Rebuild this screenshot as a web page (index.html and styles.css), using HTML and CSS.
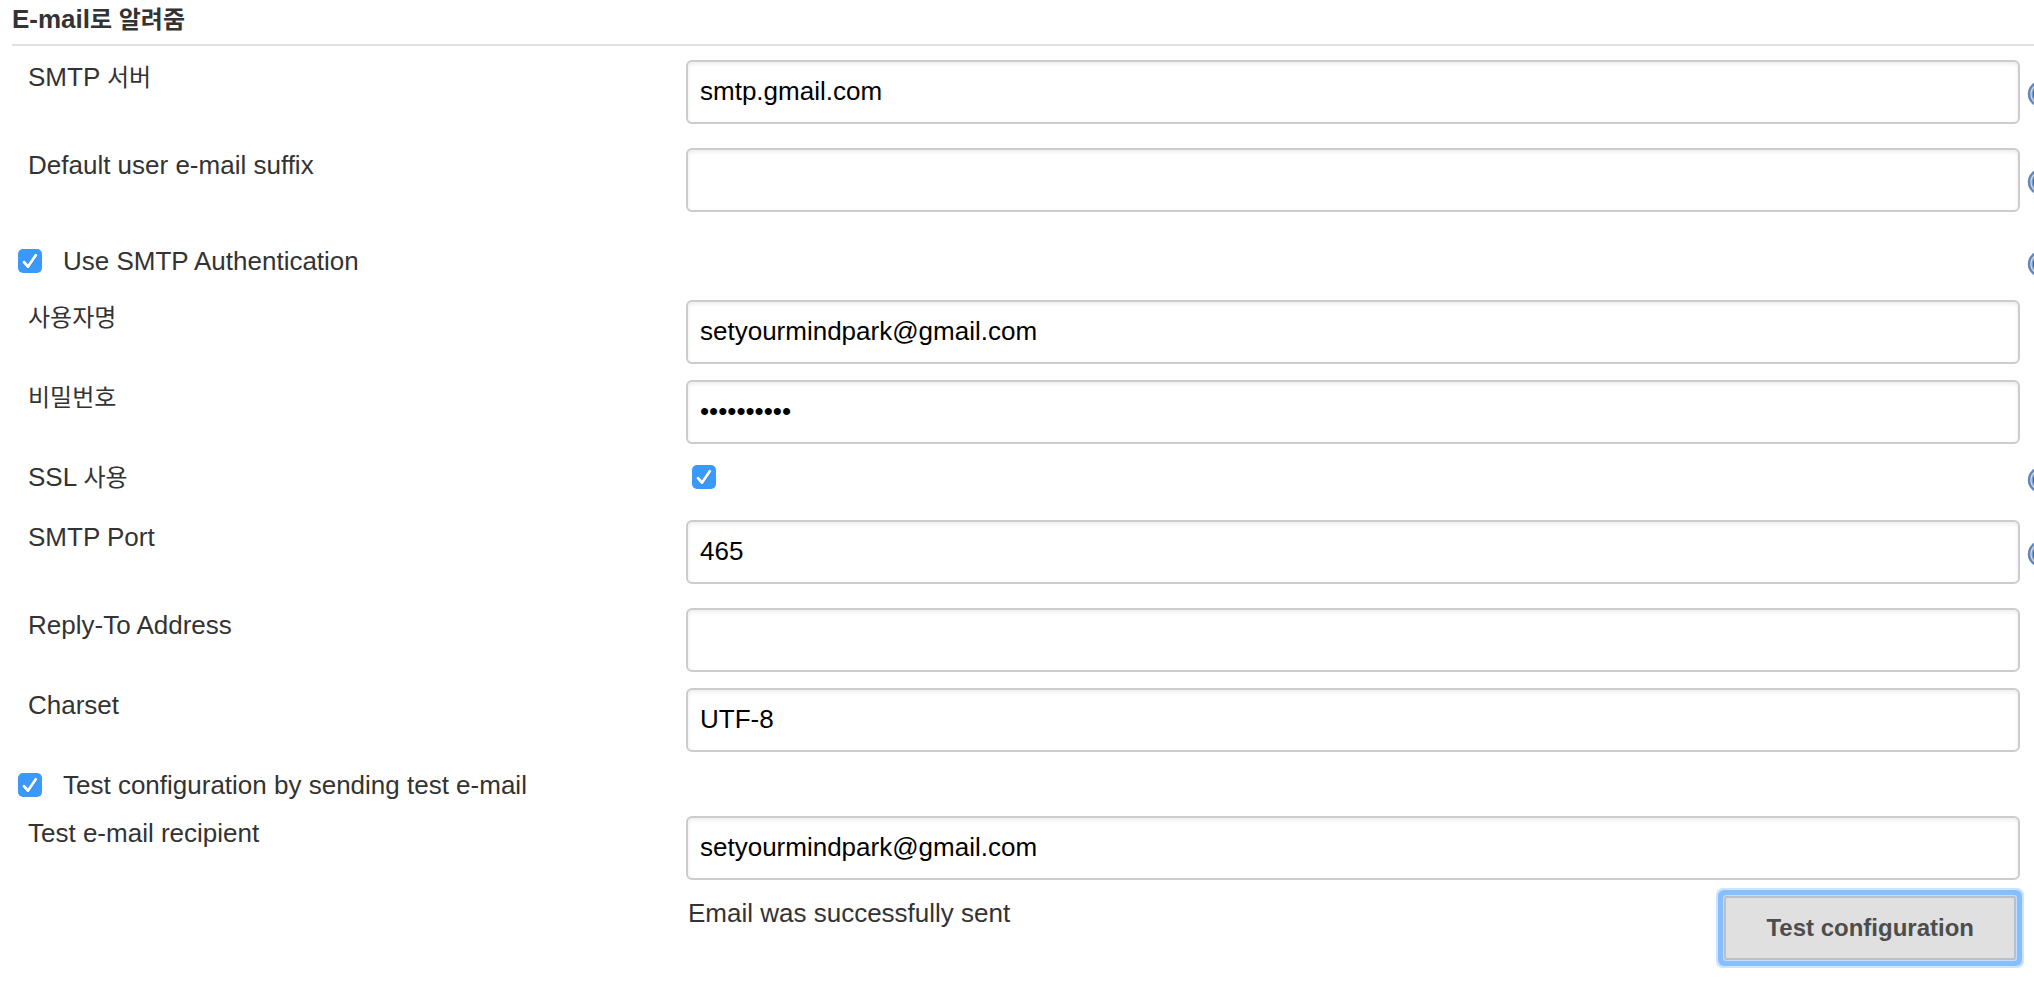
FILE: index.html
```
<!DOCTYPE html>
<html lang="ko">
<head>
<meta charset="utf-8">
<title>E-mail로 알려줌</title>
<link rel="stylesheet" href="styles.css">
</head>
<body>
<svg class="defs" aria-hidden="true">
  <defs>
    <symbol id="tick" viewBox="0 0 24 24">
      <path d="M6 14.5L10 19L18 7.5" fill="none" stroke="#1f6fc4" stroke-opacity=".5" stroke-width="2.6" stroke-linecap="round" stroke-linejoin="round"/>
      <path d="M6 13.3L10 17.7L17.8 6.3" fill="none" stroke="#fff" stroke-width="2.8" stroke-linecap="round" stroke-linejoin="round"/>
    </symbol>
    <symbol id="help" viewBox="0 0 32 32">
      <circle cx="16" cy="16" r="12" fill="#c9d6e8" stroke="#6484b5" stroke-width="2.4"/>
      <circle cx="16" cy="16" r="8.800" fill="#3465a4" stroke="#7d9ac4" stroke-width="1.500"/>
      <path d="M12.500 13a3.500 3.500 0 1 1 5 3.200c-1 .5-1.500 1-1.500 2.300M16 21v1.500" fill="none" stroke="#fff" stroke-width="2.400"/>
    </symbol>
  </defs>
</svg>
<form class="config">
  <h2 class="section-title">E-mail<span class="ko">로 알려줌</span></h2>

  <div class="row row-loose">
    <label class="name" for="smtp">SMTP <span class="ko">서버</span></label>
    <input class="field" id="smtp" type="text" value="smtp.gmail.com">
    <button class="help" type="button" aria-label="Help"><svg class="icon"><use href="#help"/></svg></button>
  </div>

  <div class="row row-loose">
    <label class="name" for="suffix">Default user e-mail suffix</label>
    <input class="field" id="suffix" type="text">
    <button class="help" type="button" aria-label="Help"><svg class="icon"><use href="#help"/></svg></button>
  </div>

  <div class="row option option-tall">
    <label class="toggle">
      <span class="check"><input class="box" type="checkbox" checked><svg class="tick"><use href="#tick"/></svg></span>
      Use SMTP Authentication
    </label>
    <button class="help" type="button" aria-label="Help"><svg class="icon"><use href="#help"/></svg></button>
  </div>

  <div class="row">
    <label class="name" for="user"><span class="ko">사용자명</span></label>
    <input class="field" id="user" type="text" value="setyourmindpark@gmail.com">
  </div>

  <div class="row">
    <label class="name" for="pass"><span class="ko">비밀번호</span></label>
    <input class="field" id="pass" type="password" value="abcdefghij">
  </div>

  <div class="row row-check">
    <label class="name" for="ssl">SSL <span class="ko">사용</span></label>
    <span class="check"><input class="box" id="ssl" type="checkbox" checked><svg class="tick"><use href="#tick"/></svg></span>
    <button class="help" type="button" aria-label="Help"><svg class="icon"><use href="#help"/></svg></button>
  </div>

  <div class="row row-loose">
    <label class="name" for="port">SMTP Port</label>
    <input class="field" id="port" type="text" value="465">
    <button class="help" type="button" aria-label="Help"><svg class="icon"><use href="#help"/></svg></button>
  </div>

  <div class="row">
    <label class="name" for="reply">Reply-To Address</label>
    <input class="field" id="reply" type="text">
  </div>

  <div class="row">
    <label class="name" for="charset">Charset</label>
    <input class="field" id="charset" type="text" value="UTF-8">
  </div>

  <div class="row option">
    <label class="toggle">
      <span class="check"><input class="box" type="checkbox" checked><svg class="tick"><use href="#tick"/></svg></span>
      Test configuration by sending test e-mail
    </label>
  </div>

  <div class="row">
    <label class="name" for="recipient">Test e-mail recipient</label>
    <input class="field" id="recipient" type="text" value="setyourmindpark@gmail.com">
  </div>

  <div class="row">
    <div class="result">
      <output class="message">Email was successfully sent</output>
      <button class="submit" type="button">Test configuration</button>
    </div>
  </div>
</form>
</body>
</html>
```
FILE: styles.css
```
* {
  box-sizing: border-box;
}

body {
  margin: 0;
  background: #fff;
  color: #333;
  font: 26px/30px "Liberation Sans", Arial, "Noto Sans CJK KR", sans-serif;
  overflow-x: hidden;
}

.defs {
  display: none;
}

.config {
  padding-left: 12px;
}

.section-title {
  margin: 0 0 14px;
  padding: 4px 0 10px;
  border-bottom: 2px solid #e0e0e0;
  font-size: 26px;
  line-height: 30px;
}

.ko {
  font-size: 24px;
  line-height: 24px;
}

/* name | value | help */
.row {
  display: grid;
  grid-template-columns: 674px minmax(0, 1fr) 14px;
  align-items: start;
  padding-bottom: 16px;
}

.row-loose {
  padding-bottom: 24px;
}

.name {
  padding: 2px 16px 0;
}

.field {
  width: 100%;
  height: 64px;
  padding: 0 12px 2px;
  border: 2px solid #ccc;
  border-radius: 6px;
  background: #fff;
  box-shadow: inset 0 2px 4px rgba(0, 0, 0, 0.08);
  color: #000;
  font: inherit;
}

/* the icon is wider than its column and runs off the right edge */
.help {
  grid-column: 3;
  width: 14px;
  height: 32px;
  margin-top: 18px;
  padding: 0 0 0 5px;
  border: 0;
  background: none;
  overflow: hidden;
}

.icon {
  display: block;
  width: 32px;
  height: 32px;
}

.row-check {
  min-height: 60px;
  padding-bottom: 0;
}

.row-check .help {
  margin-top: 4px;
}

.row-check .check {
  margin: 5px 6px;
}

.check {
  display: grid;
  width: 24px;
  height: 24px;
}

.box,
.tick {
  grid-area: 1 / 1;
  width: 24px;
  height: 24px;
}

.box {
  margin: 0;
  appearance: none;
  border-radius: 5px;
  background: #3b99fc;
}

.tick {
  pointer-events: none;
}

.option {
  min-height: 48px;
  padding-bottom: 0;
}

.option-tall {
  min-height: 64px;
  padding-top: 8px;
}

.option .help {
  margin-top: 4px;
}

.toggle {
  grid-column: 1 / 3;
  display: flex;
  align-items: center;
  gap: 21px;
  padding: 2px 6px;
}

.result {
  grid-column: 2;
  display: flex;
  justify-content: space-between;
  align-items: flex-start;
  padding: 0 4px 0 2px;
}

.message {
  padding-top: 2px;
}

.submit {
  height: 64px;
  padding: 0 40px;
  border: 2px solid #b8c0c8;
  border-radius: 2px;
  background: #e0e0e0;
  box-shadow: 0 0 0 1px #c4e0ff, 0 0 0 6px #85bfff, 0 0 0 8px #cce4ff;
  color: #4d4d4d;
  font: bold 24px/30px "Liberation Sans", Arial, sans-serif;
}
```
